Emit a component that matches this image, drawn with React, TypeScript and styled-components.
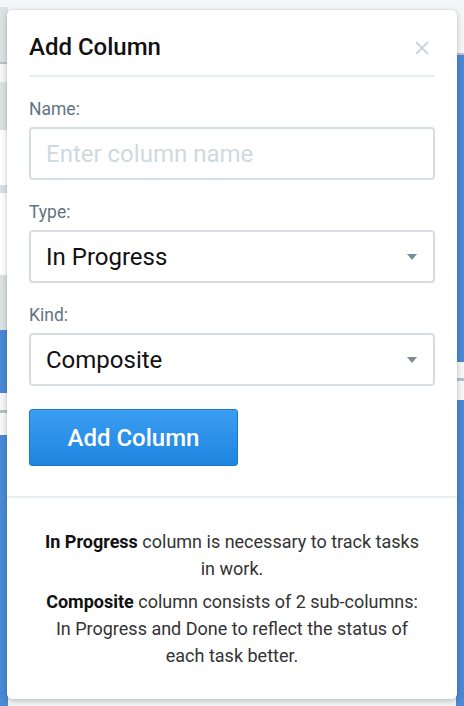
import React from 'react';
import styled, { createGlobalStyle } from 'styled-components';

const GlobalStyle = createGlobalStyle`
  html, body {
    margin: 0;
    padding: 0;
  }
  body {
    font-family: Roboto, "Liberation Sans", Arial, sans-serif;
    background: #f4f5f6;
  }
  * {
    box-sizing: border-box;
  }
`;

// the board behind the popover: only thin slivers show at both sides
const Page = styled.div`
  min-height: 706px;
  padding: 10px 7px 6px;
  background:
    linear-gradient(
        to bottom,
        #f4f5f6 0 7px,
        #dce1e4 7px 62px,
        #b9c3c9 62px 64px,
        #f7f7f7 64px 82px,
        #dce1e4 82px 130px,
        #ffffff 130px 185px,
        #dce1e4 185px 193px,
        #ffffff 193px 275px,
        #dce1e4 275px 330px,
        #4a89d6 330px 393px,
        #f7f7f7 393px 410px,
        #b4c0c6 410px 413px,
        #f7f7f7 413px 435px,
        #4a89d6 435px
      )
      left top / 8px 100% no-repeat,
    linear-gradient(
        to bottom,
        #f4f5f6 0 53px,
        #b9c3c9 53px 55px,
        #4a89d6 55px 362px,
        #f7f7f7 362px 378px,
        #b4c0c6 378px 381px,
        #f7f7f7 381px 400px,
        #4a89d6 400px
      )
      right top / 8px 100% no-repeat,
    #f4f5f6;
`;

const Popover = styled.div`
  width: 450px;
  background: #fff;
  border-radius: 5px;
  box-shadow: 0 2px 6px rgba(0, 0, 0, 0.22), 0 0 1px rgba(0, 0, 0, 0.2);
  overflow: hidden;
`;

const Header = styled.div`
  display: flex;
  align-items: center;
  justify-content: space-between;
  margin: 0 22px;
  padding: 25px 0 15px;
  border-bottom: 2px solid #e8eef2;
`;

const Title = styled.h2`
  margin: 0;
  font-size: 24px;
  line-height: 25px;
  font-weight: 500;
  color: #111;
`;

const Close = styled.button`
  display: flex;
  align-items: center;
  justify-content: center;
  width: 20px;
  height: 20px;
  margin-right: 3px;
  padding: 0;
  border: 0;
  background: none;
  color: #c9d4da;
  cursor: pointer;
`;

const Body = styled.div`
  padding: 22px 22px 30px;
`;

const Field = styled.div`
  margin-bottom: 22px;
`;

const Label = styled.label`
  display: block;
  margin-bottom: 8px;
  font-size: 17.5px;
  line-height: 20px;
  color: #5f7482;
`;

const controlCss = `
  display: block;
  width: 100%;
  height: 53px;
  padding: 0 40px 0 15px;
  border: 2px solid #d5dee2;
  border-radius: 4px;
  background: #fff;
  font-family: Roboto, "Liberation Sans", Arial, sans-serif;
  font-size: 24px;
  color: #111;
  outline: none;
`;

const TextInput = styled.input`
  ${controlCss}
  &::placeholder {
    color: #d0d9de;
  }
`;

const SelectWrap = styled.div`
  position: relative;
`;

const Select = styled.select`
  ${controlCss}
  appearance: none;
  -webkit-appearance: none;
`;

const Caret = styled.svg`
  position: absolute;
  right: 18px;
  top: 50%;
  margin-top: -3px;
  pointer-events: none;
`;

const SubmitButton = styled.button`
  display: block;
  width: 209px;
  height: 57px;
  margin-top: 23px;
  border: 1px solid #1b79cd;
  border-radius: 3px;
  background: linear-gradient(to bottom, #3b9df2, #1e85df);
  color: #fff;
  font-family: Roboto, "Liberation Sans", Arial, sans-serif;
  font-size: 24px;
  font-weight: 500;
  cursor: pointer;
`;

const Footer = styled.div`
  padding: 30px 34px 30px;
  border-top: 2px solid #e9eef2;
  text-align: center;
  color: #333;
  font-size: 18px;
  line-height: 27px;
`;

const Note = styled.p`
  margin: 0;
  & + & {
    margin-top: 6px;
  }
  b {
    font-weight: 700;
    color: #111;
  }
`;

interface DropdownProps {
  id: string;
  value: string;
  options: string[];
}

const Dropdown: React.FC<DropdownProps> = function (props) {
  const { id, value, options } = props;
  return (
    <SelectWrap>
      <Select id={id} defaultValue={value}>
        {options.map((o) => (
          <option key={o}>{o}</option>
        ))}
      </Select>
      <Caret width="10" height="6" viewBox="0 0 10 6">
        <path d="M0 0h10L5 6z" fill="#7b8c96" />
      </Caret>
    </SelectWrap>
  );
};

const App: React.FC = function () {
  return (
    <>
      <GlobalStyle />
      <Page>
        <Popover>
          <Header>
            <Title>Add Column</Title>
            <Close aria-label="Close">
              <svg width="14" height="14" viewBox="0 0 14 14">
                <path
                  d="M1 1l12 12M13 1L1 13"
                  stroke="currentColor"
                  strokeWidth="1.8"
                  fill="none"
                />
              </svg>
            </Close>
          </Header>
          <Body>
            <Field>
              <Label htmlFor="col-name">Name:</Label>
              <TextInput id="col-name" placeholder="Enter column name" />
            </Field>
            <Field>
              <Label htmlFor="col-type">Type:</Label>
              <Dropdown
                id="col-type"
                value="In Progress"
                options={['Backlog', 'In Progress', 'Done']}
              />
            </Field>
            <Field>
              <Label htmlFor="col-kind">Kind:</Label>
              <Dropdown
                id="col-kind"
                value="Composite"
                options={['Simple', 'Composite']}
              />
            </Field>
            <SubmitButton>Add Column</SubmitButton>
          </Body>
          <Footer>
            <Note>
              <b>In Progress</b> column is necessary to track tasks in work.
            </Note>
            <Note>
              <b>Composite</b> column consists of 2 sub-columns: In Progress and
              Done to reflect the status of each task better.
            </Note>
          </Footer>
        </Popover>
      </Page>
    </>
  );
};

export default App;
